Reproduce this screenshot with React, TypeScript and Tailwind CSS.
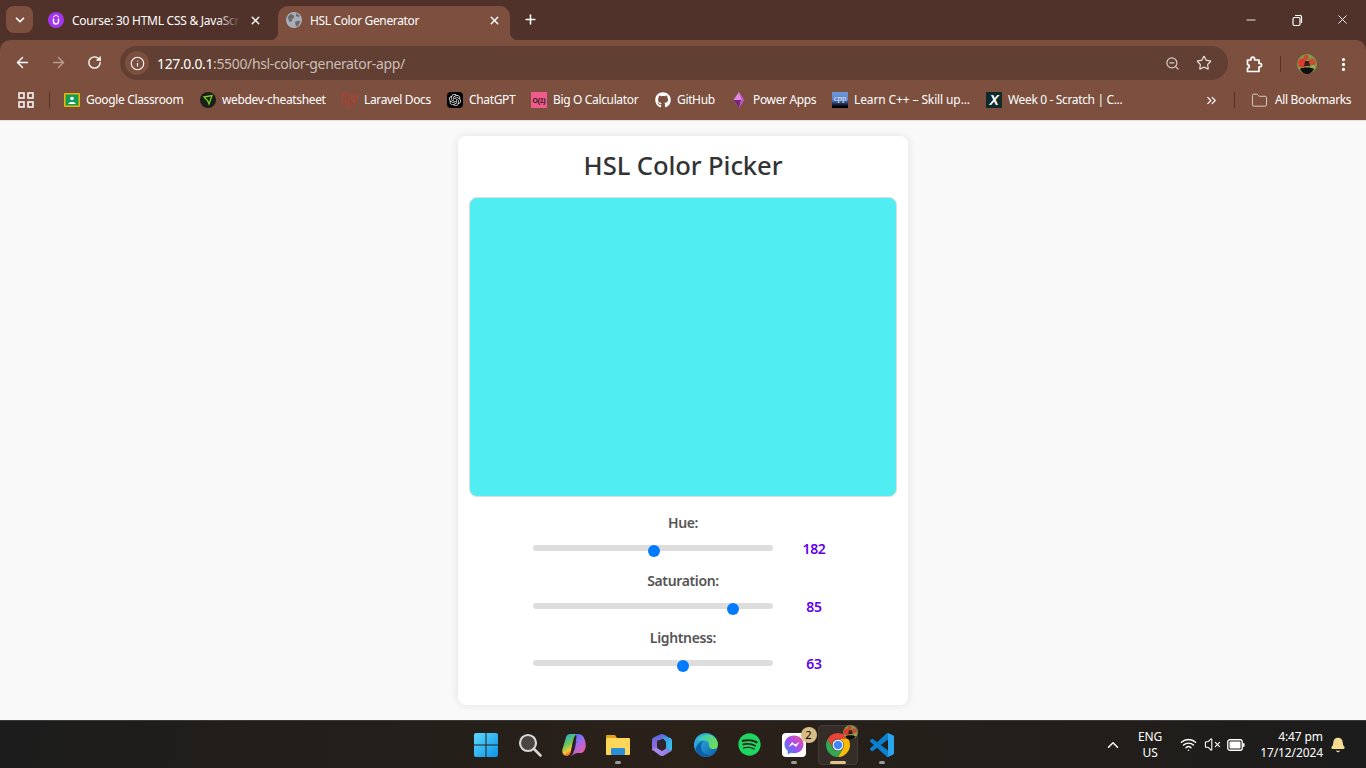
import { ArrowLeft, ArrowRight, ChevronDown, ChevronUp, ChevronsRight, Folder, Info, Plus, RotateCw, Star, VolumeX, Wifi, X, ZoomOut, EllipsisVertical, Minus, Bell } from 'lucide-react';
import { FaGithub, FaSpotify } from 'react-icons/fa';
import { SiLaravel, SiOpenai } from 'react-icons/si';

const FONT = "font-['Noto_Sans','Open_Sans',sans-serif]";

const Classroom = () => (
  <svg width="16" height="16" viewBox="0 0 16 16">
    <rect width="16" height="14" y="1" fill="#f4b400" rx="1" />
    <rect x="1.500" y="2.500" width="13" height="11" fill="#0f9d58" />
    <circle cx="8" cy="6.500" r="1.800" fill="#fff" />
    <path d="M4.500 11.500c0-2 7-2 7 0v.5h-7z" fill="#fff" />
  </svg>
);

const Webdev = () => (
  <svg width="16" height="16" viewBox="0 0 16 16">
    <circle cx="8" cy="8" r="8" fill="#1a1f1a" />
    <path d="M4 5l8-1.500-3 8.500-1.500-3.500z" fill="none" stroke="#7ed321" strokeWidth="1.300" />
  </svg>
);

const ChatGpt = () => (
  <span className="flex h-4 w-4 items-center justify-center rounded-[4px] bg-black text-[#e4e4e4]">
    <SiOpenai size={12} />
  </span>
);

const BigO = () => (
  <span className="flex h-4 w-4 items-center justify-center bg-[#ee5c8a] font-['Liberation_Sans',sans-serif] text-[7px] font-bold leading-none tracking-[-0.3px] text-[#2a1020]">O(1)</span>
);

const PowerApps = () => (
  <svg width="16" height="16" viewBox="0 0 16 16">
    <path d="M8 0l5.500 8L8 16 5 8z" fill="#b952c4" />
    <path d="M8 0L2.500 8 8 16l2.500-8z" fill="#e08be0" />
    <path d="M2.500 8L8 16l2-8z" fill="#742774" />
  </svg>
);

const Cpp = () => (
  <span className="flex h-4 w-4 flex-col bg-gradient-to-b from-[#6f9ade] via-[#5a80c8] to-black text-center font-['Liberation_Serif',serif] text-[9px] leading-[13px] text-[#e8eefc]">cpp</span>
);

const Scratch = () => (
  <span className="flex h-4 w-4 items-center justify-center bg-[#0e2a2a] font-['Liberation_Sans',sans-serif] text-[14px] font-bold italic leading-none text-white">X</span>
);

const bookmarks = [
  { name: 'Google Classroom', icon: <Classroom />, width: 'w-[136px]' },
  { name: 'webdev-cheatsheet', icon: <Webdev />, width: 'w-[142px]' },
  { name: 'Laravel Docs', icon: <SiLaravel size={16} color="#d0392f" />, width: 'w-[105px]' },
  { name: 'ChatGPT', icon: <ChatGpt />, width: 'w-[84px]' },
  { name: 'Big O Calculator', icon: <BigO />, width: 'w-[124px]' },
  { name: 'GitHub', icon: <FaGithub size={16} color="#fff" />, width: 'w-[76px]' },
  { name: 'Power Apps', icon: <PowerApps />, width: 'w-[101px]' },
  { name: 'Learn C++ – Skill up...', icon: <Cpp />, width: 'w-[154px] tracking-[-0.12px]' },
  { name: 'Week 0 - Scratch | C...', icon: <Scratch />, width: 'w-[153px]' },
];

const sliders = [
  { label: 'Hue:', value: 182, max: 360 },
  { label: 'Saturation:', value: 85, max: 100 },
  { label: 'Lightness:', value: 63, max: 100 },
];

const Avatar = ({ size }: { size: number }) => (
  <svg width={size} height={size} viewBox="0 0 20 20">
    <circle cx="10" cy="10" r="10" fill="#7c9a4a" />
    <circle cx="5.500" cy="9" r="4.500" fill="#e03a2c" />
    <circle cx="15" cy="8" r="3.500" fill="#cf4a34" />
    <circle cx="9" cy="3.500" r="2.500" fill="#c9472f" />
    <circle cx="16" cy="13" r="2" fill="#8fae5a" />
    <path d="M8 7h4l1 5H7z" fill="#3a1e1a" />
    <path d="M3 15c3-2 11-2 14 0-2 4-5 5-7 5s-5-1-7-5z" fill="#0e0e0e" />
  </svg>
);

const UdemyIcon = () => (
  <svg width="16" height="16" viewBox="0 0 16 16" className="shrink-0">
    <circle cx="8" cy="8" r="8" fill="#a435f0" />
    <path d="M8 2.800l3 1.700v.9L8 3.700 5 5.400v-.9z" fill="#fff" />
    <path d="M5.500 6.500v3a2.500 2.500 0 0 0 5 0v-3" fill="none" stroke="#fff" strokeWidth="1.500" />
  </svg>
);

const GlobeIcon = () => (
  <svg width="16" height="16" viewBox="0 0 16 16" className="shrink-0">
    <circle cx="8" cy="8" r="8" fill="#a9aeb8" />
    <path d="M1.500 5l3-3 3 1 1 2-2 2-1 2.500-2 .5zM9 10l3-1.500 2.500 1L12 14l-2 .5z" fill="#6f6a6c" />
    <path d="M10 1l4 3-2 1-2-1z" fill="#6f6a6c" />
  </svg>
);

const ExtensionIcon = () => (
  <svg width="17" height="17" viewBox="0 0 17 17" fill="none" stroke="#fff" strokeWidth="1.700" strokeLinejoin="round">
    <path d="M1.500 4H5V3a1.800 1.800 0 0 1 3.600 0v1H13v3.300h.8a1.800 1.800 0 0 1 0 3.600H13V15.500H1.500v-3.300a1.800 1.800 0 0 0 0-3.600z" />
  </svg>
);

const TabStrip = () => (
  <div className="flex h-10 items-start bg-[#50322a] pl-[6px] text-white">
    <div className="mt-[6px] flex h-[27px] w-[27px] items-center justify-center rounded-lg bg-[#7c4f3e]">
      <ChevronDown size={14} strokeWidth={3} />
    </div>
    <div className="ml-[15px] mt-[6px] flex h-[28px] w-[230px] items-center">
      <UdemyIcon />
      <div className="relative ml-2 mt-[2px] w-[169px] whitespace-nowrap text-[12px] tracking-[-0.26px]">
        Course: 30 HTML CSS &amp; JavaScr
        <span className="absolute inset-y-0 right-0 w-6 bg-gradient-to-r from-transparent to-[#50322a]" />
      </div>
      <X size={13} strokeWidth={2.5} className="ml-[8px]" />
    </div>
    <div className="relative mt-[6px] flex h-[34px] w-[232px] items-center rounded-t-[10px] bg-[#7c4f3e] pb-[6px] pl-[8px] pr-[9px]">
      <span className="absolute bottom-0 left-[-8px] h-2 w-2 bg-[radial-gradient(circle_at_0_0,transparent_8px,#7c4f3e_8.5px)]" />
      <span className="absolute bottom-0 right-[-8px] h-2 w-2 bg-[radial-gradient(circle_at_100%_0,transparent_8px,#7c4f3e_8.5px)]" />
      <GlobeIcon />
      <span className="ml-[8px] mt-[2px] whitespace-nowrap text-[12px] tracking-[-0.36px]">HSL Color Generator</span>
      <X size={13} strokeWidth={2.5} className="ml-auto" />
    </div>
    <Plus size={15} strokeWidth={2.5} className="ml-[13px] mt-[12px]" />
    <div className="ml-auto mr-[16px] mt-[12px] flex items-center gap-[32px]">
      <Minus size={14} strokeWidth={1.500} className="translate-x-[1px]" />
      <svg width="14" height="14" viewBox="0 0 14 14" fill="none" stroke="#fff" strokeWidth="1.200" className="translate-x-[1px]">
        <rect x="3" y="4.500" width="7" height="8" rx="1.500" />
        <path d="M5 2.500h4.500A1.500 1.500 0 0 1 11.500 4v6" />
      </svg>
      <X size={15} strokeWidth={1.500} />
    </div>
  </div>
);

const Toolbar = () => (
  <div className="flex h-10 items-start rounded-t-[10px] bg-[#7c4f3e] text-white">
    <div className="mt-[14px] flex w-[116px] items-center pl-[14px]">
      <ArrowLeft size={17} strokeWidth={2} />
      <ArrowRight size={17} strokeWidth={2} color="#b79b8f" className="ml-[19px]" />
      <RotateCw size={15} strokeWidth={2.2} className="ml-[20px]" />
    </div>
    <div className="ml-[4px] mt-[6px] flex h-[34px] w-[1108px] items-center rounded-full bg-[#613f33] pl-[5px] pr-[16px]">
      <span className="flex h-6 w-6 items-center justify-center rounded-full bg-[#7c4f3e]">
        <Info size={15} strokeWidth={1.8} />
      </span>
      <span className="ml-[8px] text-[14px] tracking-[-0.36px]">
        127.0.0.1<span className="text-[#cdbdb6]">:5500/hsl-color-generator-app/</span>
      </span>
      <ZoomOut size={15} color="#d9ccc6" className="ml-auto" />
      <Star size={16} strokeWidth={1.8} color="#e6dcd7" className="ml-[16px]" />
    </div>
    <div className="mt-[14px] flex items-center">
      <span className="ml-[18px]"><ExtensionIcon /></span>
      <span className="ml-[17px] h-4 w-px bg-[#50322a]" />
      <span className="ml-[16px]"><Avatar size={20} /></span>
      <EllipsisVertical size={17} strokeWidth={2.6} className="ml-[18px]" />
    </div>
  </div>
);

const AppsGrid = () => (
  <svg width="16" height="16" viewBox="0 0 16 16" fill="none" stroke="#fff" strokeWidth="1.500">
    <rect x="1" y="1" width="5" height="5" />
    <rect x="10" y="1" width="5" height="5" />
    <rect x="1" y="10" width="5" height="5" />
    <rect x="10" y="10" width="5" height="5" />
  </svg>
);

const BookmarkBar = () => (
  <div className="flex h-[41px] items-center border-b border-[#e8e2df] bg-[#7c4f3e] text-[12px] tracking-[-0.35px] text-white">
    <span className="ml-[18px]"><AppsGrid /></span>
    <span className="ml-[15px] mr-[14px] h-4 w-px bg-[#50322a]" />
    {bookmarks.map((b) => (
      <div key={b.name} className={`flex shrink-0 items-center gap-[6px] whitespace-nowrap ${b.width}`}>
        <span className="shrink-0">{b.icon}</span>
        <span>{b.name}</span>
      </div>
    ))}
    <ChevronsRight size={15} strokeWidth={1.8} className="ml-[65px]" />
    <span className="ml-[15px] h-4 w-px bg-[#50322a]" />
    <Folder size={17} strokeWidth={1.4} color="#d9ccc6" className="ml-[16px]" />
    <span className="ml-[7px] whitespace-nowrap">All Bookmarks</span>
  </div>
);

const Slider = ({ label, value, max }: { label: string; value: number; max: number }) => (
  <div className="flex h-[57.5px] flex-col">
    <div className="text-center text-[14px] font-semibold leading-[20px] tracking-[-0.35px] text-[#555]">{label}</div>
    <div className="flex items-start pl-[64px]">
      <div className="relative mt-[12px] h-[6px] w-[240px] rounded-[5px] bg-[#ddd]">
        <span
          className="absolute top-0 h-3 w-3 rounded-full bg-[#007bff]"
          style={{ left: `${(value / max) * 228}px` }}
        />
      </div>
      <div className="mt-[6px] w-[82px] text-center text-[14px] font-semibold leading-[20px] tracking-[-0.3px] text-[#6200ea]">{value}</div>
    </div>
  </div>
);

const Card = () => (
  <div className="mx-auto mt-[15px] h-[569px] w-[450px] rounded-lg bg-white px-[11px] shadow-[0_0_10px_rgba(0,0,0,0.1)]">
    <h1 className="flex h-[61px] items-center justify-center text-[25.6px] font-medium tracking-[-0.1px] text-[#333]">HSL Color Picker</h1>
    <div className="h-[300px] rounded-lg border border-[#ddd] bg-[#50edf3]" />
    <div className="mt-[16px]">
      {sliders.map((s) => (
        <Slider key={s.label} {...s} />
      ))}
    </div>
  </div>
);

const Dot = ({ active }: { active?: boolean }) => (
  <span className={`absolute bottom-[1px] h-[3px] rounded-full ${active ? 'w-4 bg-[#e3c58a]' : 'w-[6px] bg-[#9a9a9a]'}`} />
);

const WinLogo = () => (
  <svg width="24" height="24" viewBox="0 0 24 24">
    <defs>
      <linearGradient id="win" x1="0" y1="0" x2="1" y2="1">
        <stop offset="0" stopColor="#5fd8ff" />
        <stop offset="1" stopColor="#0a94e6" />
      </linearGradient>
    </defs>
    <path d="M2 0h9.500v11.500H0V2a2 2 0 0 1 2-2zM12.500 0H22a2 2 0 0 1 2 2v9.500H12.500zM0 12.500h11.500V24H2a2 2 0 0 1-2-2zM12.500 12.500H24V22a2 2 0 0 1-2 2h-9.500z" fill="url(#win)" />
  </svg>
);

const SearchIcon = () => (
  <svg width="24" height="24" viewBox="0 0 24 24">
    <circle cx="10" cy="10" r="8" fill="#4b4440" stroke="#d6d6d6" strokeWidth="2.200" />
    <path d="M16 16l6.500 6.500" stroke="#d6d6d6" strokeWidth="2.600" strokeLinecap="round" />
  </svg>
);

const CopilotIcon = () => (
  <svg width="24" height="24" viewBox="0 0 24 24">
    <defs>
      <linearGradient id="cop1" x1="0" y1="0" x2="0.4" y2="1">
        <stop offset="0" stopColor="#2aa4ee" />
        <stop offset="0.5" stopColor="#63c75e" />
        <stop offset="0.8" stopColor="#f6c733" />
        <stop offset="1" stopColor="#ee4c3c" />
      </linearGradient>
      <linearGradient id="cop2" x1="0.2" y1="0" x2="0.8" y2="1">
        <stop offset="0" stopColor="#2f7cf0" />
        <stop offset="0.45" stopColor="#a56ae8" />
        <stop offset="1" stopColor="#f25a96" />
      </linearGradient>
    </defs>
    <path d="M8 1h7c-2 1-3 3-3.500 5L9 18c-.5 3-2 5-4.500 5C1.500 23-.5 20 .5 16L4 4.500C4.600 2.500 6 1 8 1z" fill="url(#cop1)" />
    <path d="M13 1h3c3 0 5 1.500 6 4 1.500 3 2.300 7 1.500 10-.8 3-2.500 5-5 5h-3c-3 0-5 3-7.500 3 3-1 3.500-3 4-6l2-10c.4-2 .8-5 -.5-6z" fill="url(#cop2)" />
    <path d="M11 8h3.500L12.800 17H9.500z" fill="#2a1c3a" opacity="0.65" />
  </svg>
);

const ExplorerIcon = () => (
  <svg width="24" height="24" viewBox="0 0 24 24">
    <path d="M0 3a1 1 0 0 1 1-1h8l2 3H0z" fill="#e2a21d" />
    <rect y="5" width="24" height="17" rx="1" fill="#fdd65a" />
    <rect x="5" y="15" width="14" height="7" rx="1" fill="#2a8fd6" />
  </svg>
);

const M365Icon = () => (
  <svg width="22" height="24" viewBox="0 0 22 24">
    <defs>
      <linearGradient id="m1" x1="0" y1="0" x2="0.2" y2="1">
        <stop offset="0" stopColor="#4f66d8" />
        <stop offset="1" stopColor="#a070e0" />
      </linearGradient>
      <linearGradient id="m2" x1="0" y1="0" x2="1" y2="0.6">
        <stop offset="0" stopColor="#3a7de8" />
        <stop offset="1" stopColor="#38c0e8" />
      </linearGradient>
      <linearGradient id="m3" x1="0" y1="0" x2="1" y2="0">
        <stop offset="0" stopColor="#b68ce8" />
        <stop offset="1" stopColor="#8a7ae8" />
      </linearGradient>
    </defs>
    <path d="M9 1.500a4 4 0 0 1 4 0L17 4 6 8v8l-5 1.500A3 3 0 0 1 1 16V7a3 3 0 0 1 1.500-2.500z" fill="url(#m1)" />
    <path d="M9 2l10.500 3A3 3 0 0 1 21 7.500V16a3 3 0 0 1-1 2.200L15 15.500V9z" fill="url(#m2)" />
    <path d="M1 16.500L6 15l5 3 4-2.500 5.500 2.500-7.500 4.500a4 4 0 0 1-4 0z" fill="url(#m3)" />
    <path d="M6 8.500L11 6l4 3v6l-4 2.500-5-2.500z" fill="#3b2f52" opacity="0.35" />
  </svg>
);

const EdgeIcon = () => (
  <svg width="24" height="24" viewBox="0 0 24 24">
    <defs>
      <linearGradient id="e1" x1="0" y1="0" x2="1" y2="1">
        <stop offset="0" stopColor="#35c1f1" />
        <stop offset="1" stopColor="#0c59a4" />
      </linearGradient>
      <linearGradient id="e2" x1="0" y1="0" x2="1" y2="0.4">
        <stop offset="0" stopColor="#2fc6d8" />
        <stop offset="1" stopColor="#6ddc5a" />
      </linearGradient>
    </defs>
    <circle cx="12" cy="12" r="12" fill="url(#e1)" />
    <path d="M3.500 7C7 1 17-1 22 6c3 4 2.500 10-2 10-3 0-5.500-1.500-5-4 .3-2-1.500-4.500-5-4.500-3 0-5 .3-6.500-.5z" fill="url(#e2)" />
    <path d="M10 8c-3 2-4 6-2 10 1 2 4 4 8 4.500-5 2.500-12.500 0-14.500-6 1-5 5-8 8.500-8.500z" fill="#0f5fa8" />
  </svg>
);

const MessengerIcon = () => (
  <svg width="24" height="24" viewBox="0 0 24 24">
    <defs>
      <linearGradient id="ms" x1="0" y1="1" x2="1" y2="0">
        <stop offset="0" stopColor="#2e8cf5" />
        <stop offset="0.5" stopColor="#a34df0" />
        <stop offset="1" stopColor="#f5508a" />
      </linearGradient>
    </defs>
    <rect width="24" height="24" rx="4" fill="#fff" />
    <path d="M12 2.500C6.400 2.500 2.500 6.500 2.500 11.300c0 2.700 1.200 5 3.200 6.500V21.500l3.200-1.700c1 .3 2 .5 3.100 .5 5.600 0 9.500-4 9.500-9S17.600 2.500 12 2.500z" fill="url(#ms)" />
    <path d="M6.500 14l3.500-5 3 2.400L17.500 9 14 14l-3-2.400z" fill="#fff" />
  </svg>
);

const ChromeIcon = () => (
  <svg width="24" height="24" viewBox="0 0 24 24">
    <path d="M1.610 6A12 12 0 0 1 22.390 6H12A6 6 0 0 0 6.800 15z" fill="#ea4335" />
    <path d="M22.390 6A12 12 0 0 1 12 24L17.200 15A6 6 0 0 0 12 6z" fill="#fbbc04" />
    <path d="M1.610 6A12 12 0 0 0 12 24L17.200 15A6 6 0 0 1 6.800 15z" fill="#34a853" />
    <circle cx="12" cy="12" r="5.500" fill="#fff" />
    <circle cx="12" cy="12" r="4.300" fill="#4285f4" />
  </svg>
);

const VsCodeIcon = () => (
  <svg width="24" height="24" viewBox="0 0 24 24">
    <path d="M23.150 2.587L18.210.21a1.494 1.494 0 0 0-1.705.29l-9.460 8.630-4.120-3.128a.999.999 0 0 0-1.276.057L.327 7.261A1 1 0 0 0 .326 8.740L3.899 12 .326 15.260a1 1 0 0 0 .001 1.479L1.650 17.940a.999.999 0 0 0 1.276.057l4.120-3.128 9.460 8.630a1.492 1.492 0 0 0 1.704.29l4.942-2.377A1.500 1.500 0 0 0 24 20.060V3.939a1.500 1.500 0 0 0-.850-1.352zm-5.146 14.861L10.826 12l7.178-5.448v10.896z" fill="#0b80d0" />
    <path d="M18.210.21l4.940 2.377A1.500 1.500 0 0 1 24 3.939V20.060a1.500 1.500 0 0 1-.850 1.352L18.210 23.790a1.490 1.490 0 0 1-1.700-.29c.9.500 1.500 0 1.500-1V1.500c0-1-.6-1.500-1.500-1a1.490 1.490 0 0 1 1.700-.29z" fill="#2aa5ee" />
  </svg>
);

const BatteryIcon = () => (
  <svg width="18" height="12" viewBox="0 0 18 12" fill="none">
    <rect x="0.750" y="0.750" width="14.500" height="10.500" rx="2" stroke="#fff" strokeWidth="1.300" />
    <rect x="2.500" y="2.500" width="11" height="7" rx="0.800" fill="#fff" />
    <rect x="16" y="4" width="1.500" height="4" rx="0.700" fill="#fff" />
  </svg>
);

const taskbarApps = [
  { icon: <WinLogo /> },
  { icon: <SearchIcon /> },
  { icon: <CopilotIcon /> },
  { icon: <ExplorerIcon />, dot: true },
  { icon: <M365Icon /> },
  { icon: <EdgeIcon /> },
  { icon: <FaSpotify size={23} color="#1ed760" /> },
  { icon: <MessengerIcon />, dot: true, badge: '2' },
  { icon: <ChromeIcon />, active: true },
  { icon: <VsCodeIcon />, dot: true },
];

const Taskbar = () => (
  <div className="grid h-12 grid-cols-[1fr_auto_1fr] border-t border-[#3a3a3a] bg-gradient-to-r from-[#1c1c1c] via-[#2a2119] to-[#1c1c1c] text-white">
    <div />
    <div className="flex items-center pl-[1px]">
      {taskbarApps.map((app, i) => (
        <div key={i} className="relative flex h-10 w-[44px] items-center justify-center">
          {app.active && <span className="absolute inset-x-[2px] inset-y-0 rounded border border-[#453c35] bg-[#352d27]" />}
          <span className="relative">{app.icon}</span>
          {app.badge && (
            <span className="absolute right-[-1px] top-[2px] flex h-4 w-4 items-center justify-center rounded-full bg-[#d8bd84] text-[11px] leading-none text-black">{app.badge}</span>
          )}
          {app.active && (
            <span className="absolute right-[2px] top-0 overflow-hidden rounded-full"><Avatar size={15} /></span>
          )}
          {(app.dot || app.active) && <Dot active={app.active} />}
        </div>
      ))}
    </div>
    <div className="flex items-center justify-end text-[12px] tracking-[-0.1px]">
      <ChevronUp size={18} strokeWidth={2} />
      <div className="ml-[16px] mr-[18px] text-center leading-[16px]">
        <div>ENG</div>
        <div>US</div>
      </div>
      <Wifi size={17} strokeWidth={2} />
      <VolumeX size={17} strokeWidth={1.5} className="ml-[7px]" />
      <span className="ml-[6px]"><BatteryIcon /></span>
      <div className="ml-[15px] text-right leading-[16px]">
        <div>4:47 pm</div>
        <div>17/12/2024</div>
      </div>
      <Bell size={16} color="#f5dc90" fill="#f5dc90" className="ml-[7px] mr-[20px]" />
    </div>
  </div>
);

export default function App() {
  return (
    <div className={`flex h-[768px] flex-col overflow-hidden bg-[#f9f9f9] ${FONT}`}>
      <div className="bg-[#50322a]">
        <TabStrip />
        <Toolbar />
      </div>
      <BookmarkBar />
      <main className="flex-1">
        <Card />
      </main>
      <Taskbar />
    </div>
  );
}
